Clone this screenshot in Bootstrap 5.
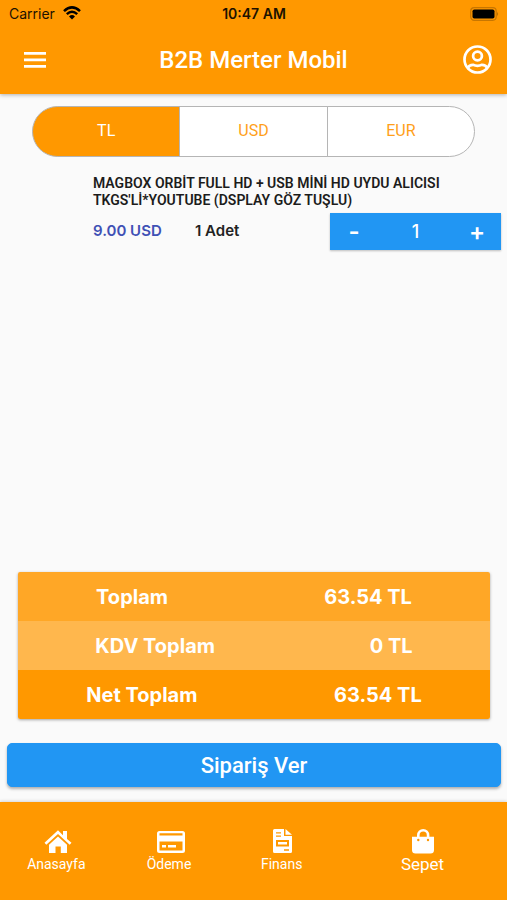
<!DOCTYPE html>
<html lang="tr">
<head>
<meta charset="utf-8">
<meta name="viewport" content="width=device-width, initial-scale=1">
<title>B2B Merter Mobil</title>
<link rel="stylesheet" href="https://cdn.jsdelivr.net/npm/bootstrap@5.3.0/dist/css/bootstrap.min.css">
<style>
:root { --orange: #ff9800; --blue: #2196f3; }
body { background: #fafafa; color: #222; font-family: Roboto, "Liberation Sans", sans-serif; }
.inter { font-family: Inter, "Liberation Sans", sans-serif; }
.top-area { background: var(--orange); box-shadow: 0 1px 4px rgba(0,0,0,.3); }
.status { height: 28px; font-size: 14px; padding: 0 8px 2px 9px; color: #1c1200; }
.status > * { flex: 1 1 0; }
.app-bar { height: 66px; padding: 0 14px 2px; }
.app-title { font-size: 24px; line-height: 28px; font-weight: 500; }
.icon-btn { width: 42px; height: 32px; line-height: 0; }
.currency { margin: 12px 32px 0; height: 51px; }
.currency .btn { --bs-btn-color: #ff9f1a; --bs-btn-bg: #fff; --bs-btn-border-color: #b5b5b5;
  --bs-btn-hover-color: #ff9800; --bs-btn-hover-bg: #fff5e6; --bs-btn-hover-border-color: #b5b5b5;
  --bs-btn-active-bg: var(--orange); --bs-btn-active-color: #fff; --bs-btn-active-border-color: #b5b5b5;
  flex: 1 1 0; font-size: 16px; line-height: 24px; padding: 12px 0; }
.product { margin: 18px 6px 0 93px; }
.product-name { font-size: 14px; line-height: 17px; font-weight: 600; color: #1c1c1c; }
.product-info { font-size: 15px; font-weight: 600; }
.price { color: #3f51b5; width: 102px; }
.stepper { width: 171px; height: 37px; background: var(--blue); box-shadow: 0 1px 2px rgba(0,0,0,.25); }
.stepper .btn { width: 48px; flex: none; font-size: 24px; line-height: 28px; font-weight: 600; padding: 0; }
.stepper input { width: 75px; min-width: 0; font-size: 18px; font-weight: 500; background: transparent; }
.totals { margin: 0 17px 0 18px; border-radius: 2px; overflow: hidden; box-shadow: 0 1px 3px rgba(0,0,0,.35); font-size: 20px; font-weight: 700; }
.totals > div { height: 49px; }
.tone-mid { background: #ffa726; }
.tone-light { background: #ffb74d; }
.tone-full { background: var(--orange); }
.order { margin: 24px 6px 15px 7px; height: 44px; border-radius: 5px; font-size: 22px; line-height: 28px; font-weight: 500; padding: 2px 0 0;
  --bs-btn-color: #fff; --bs-btn-bg: #2196f3; --bs-btn-border-color: #2196f3; --bs-btn-hover-color: #fff; --bs-btn-hover-bg: #1e88e5; box-shadow: 0 2px 3px rgba(0,0,0,.3); }
.bottom-nav { background: var(--orange); height: 98px; font-size: 14px; line-height: 17px; box-shadow: 0 -1px 3px rgba(0,0,0,.15); }
.bottom-nav a { flex: 2 1 0; padding-top: 25px; }
.bottom-nav a.current { flex-grow: 3; font-size: 17px; }
.bottom-nav svg { margin-bottom: 1px; }
</style>
<script src="https://cdn.jsdelivr.net/npm/bootstrap@5.3.0/dist/js/bootstrap.bundle.min.js" defer></script>
</head>
<body class="d-flex flex-column min-vh-100">
<header class="top-area text-white">
  <div class="status inter d-flex align-items-center">
    <div class="d-flex align-items-center gap-2">
      <span>Carrier</span>
      <svg width="18" height="14" viewBox="0 0 18 14" fill="none" stroke="#000" stroke-width="2.5"><path d="M1 5.200Q9-2.400 17 5.200M3.800 8.200Q9 3.300 14.200 8.200"/><path d="M9 13.500 6 10.400Q9 7.800 12 10.400Z" fill="#000" stroke="none"/></svg>
    </div>
    <div class="text-center fw-semibold">10:47 AM</div>
    <div class="text-end lh-1">
      <svg width="30" height="14" viewBox="0 0 30 14"><rect x="1.700" y=".7" width="25.500" height="12.600" rx="3.500" fill="none" stroke="#c87600" stroke-width="1.200"/><rect x="3.500" y="2.500" width="22" height="9" rx="1.800" fill="#000"/><path d="M28.200 4.800Q30 7 28.200 9.200Z" fill="#a86400"/></svg>
    </div>
  </div>
  <nav class="app-bar d-flex align-items-center justify-content-between">
    <button class="icon-btn btn p-0 border-0" type="button" aria-label="Menü">
      <svg width="22" height="16" viewBox="0 0 22 16" fill="#fff"><path d="M0 0h22v2.800H0zM0 6.500h22v2.800H0zM0 13h22v2.800H0z"/></svg>
    </button>
    <h1 class="app-title m-0">B2B Merter Mobil</h1>
    <button class="icon-btn btn p-0 border-0 text-end" type="button" aria-label="Hesap">
      <svg width="30" height="30" viewBox="0 0 30 30" fill="none" stroke="#fff" stroke-width="2.700"><circle cx="14.500" cy="14.500" r="13"/><circle cx="14.500" cy="11" r="4.400"/><path d="M5 22.700Q6.200 19.800 10 19.800Q14.500 21.800 19 19.800Q22.800 19.800 24 22.700"/></svg>
    </button>
  </nav>
</header>

<main class="flex-grow-1 d-flex flex-column">
  <div class="currency btn-group" role="group" aria-label="Para birimi">
    <input type="radio" class="btn-check" name="currency" id="cur-tl" checked>
    <label class="btn rounded-start-pill" for="cur-tl">TL</label>
    <input type="radio" class="btn-check" name="currency" id="cur-usd">
    <label class="btn" for="cur-usd">USD</label>
    <input type="radio" class="btn-check" name="currency" id="cur-eur">
    <label class="btn rounded-end-pill" for="cur-eur">EUR</label>
  </div>

  <article class="product">
    <h2 class="product-name m-0">MAGBOX ORBİT FULL HD + USB MİNİ HD UYDU ALICISI<br>TKGS'Lİ*YOUTUBE (DSPLAY GÖZ TUŞLU)</h2>
    <div class="product-info inter d-flex align-items-center mt-1">
      <span class="price">9.00 USD</span>
      <span>1 Adet</span>
      <div class="stepper d-flex ms-auto">
        <button class="btn border-0 rounded-0 text-white" type="button" aria-label="Azalt">-</button>
        <input class="flex-fill border-0 p-0 text-center text-white" type="text" value="1" aria-label="Adet">
        <button class="btn border-0 rounded-0 text-white" type="button" aria-label="Artır">+</button>
      </div>
    </div>
  </article>

  <section class="totals inter text-white mt-auto">
    <div class="tone-mid d-flex align-items-center justify-content-around"><span>Toplam</span><span>63.54 TL</span></div>
    <div class="tone-light d-flex align-items-center justify-content-around"><span>KDV Toplam</span><span>0 TL</span></div>
    <div class="tone-full d-flex align-items-center justify-content-around"><span>Net Toplam</span><span>63.54 TL</span></div>
  </section>
  <button class="order btn" type="button">Sipariş Ver</button>
</main>

<nav class="bottom-nav d-flex">
  <a href="#" class="d-flex flex-column align-items-center text-white text-decoration-none">
    <svg width="32" height="28" viewBox="-4 0 32 28" fill="#fff"><path d="M.5 15.800 14 3.300 19 8.300V4h4v8l4.500 3.800-1.800 2L14 7 2.300 17.800Z"/><path d="M5 17.800 14 9.500l9 8.300V26h-6.200v-6.500h-5.300V26H5Z"/></svg>
    Anasayfa
  </a>
  <a href="#" class="d-flex flex-column align-items-center text-white text-decoration-none">
    <svg width="32" height="28" viewBox="-4 0 32 28"><path fill="#fff" fill-rule="evenodd" d="M2.500 4h23Q28 4 28 6.500v17q0 2.500-2.500 2.500h-23Q0 26 0 23.500v-17Q0 4 2.500 4ZM2.500 6.300v2.200h23V6.300ZM2.500 14.500v9h23v-9ZM5 18h4v2.500H5ZM11 18h8v2.500h-8Z"/></svg>
    Ödeme
  </a>
  <a href="#" class="d-flex flex-column align-items-center text-white text-decoration-none">
    <svg width="28" height="28" viewBox="0 0 28 28"><path fill="#fff" fill-rule="evenodd" d="M6.500 2H16v7h8v15.500q0 1.500-1.500 1.500H6.500Q5 26 5 24.500v-21Q5 2 6.500 2ZM8 5.200v1.300h5V5.200ZM8 8.500v1.300h5V8.500ZM8 13v6.500h13V13ZM10 15h9v2.500h-9ZM16 22.300v1.400h5v-1.400Z"/><path d="M17.500 2 24 7.800h-6.500Z" fill="#fff"/></svg>
    Finans
  </a>
  <a href="#" class="current d-flex flex-column align-items-center text-white text-decoration-none" aria-current="page">
    <svg width="28" height="28" viewBox="0 0 28 28"><path fill="#fff" d="M3 9.800h22V23q0 3.500-3.500 3.500h-15Q3 26.500 3 23Z"/><path d="M9.300 12V8.200a4.900 4.900 0 0 1 9.800 0V12" fill="none" stroke="#fff" stroke-width="2.600"/><circle cx="9.300" cy="13" r="1.200" fill="#ff9800"/><circle cx="19" cy="13" r="1.200" fill="#ff9800"/></svg>
    Sepet
  </a>
</nav>
</body>
</html>
